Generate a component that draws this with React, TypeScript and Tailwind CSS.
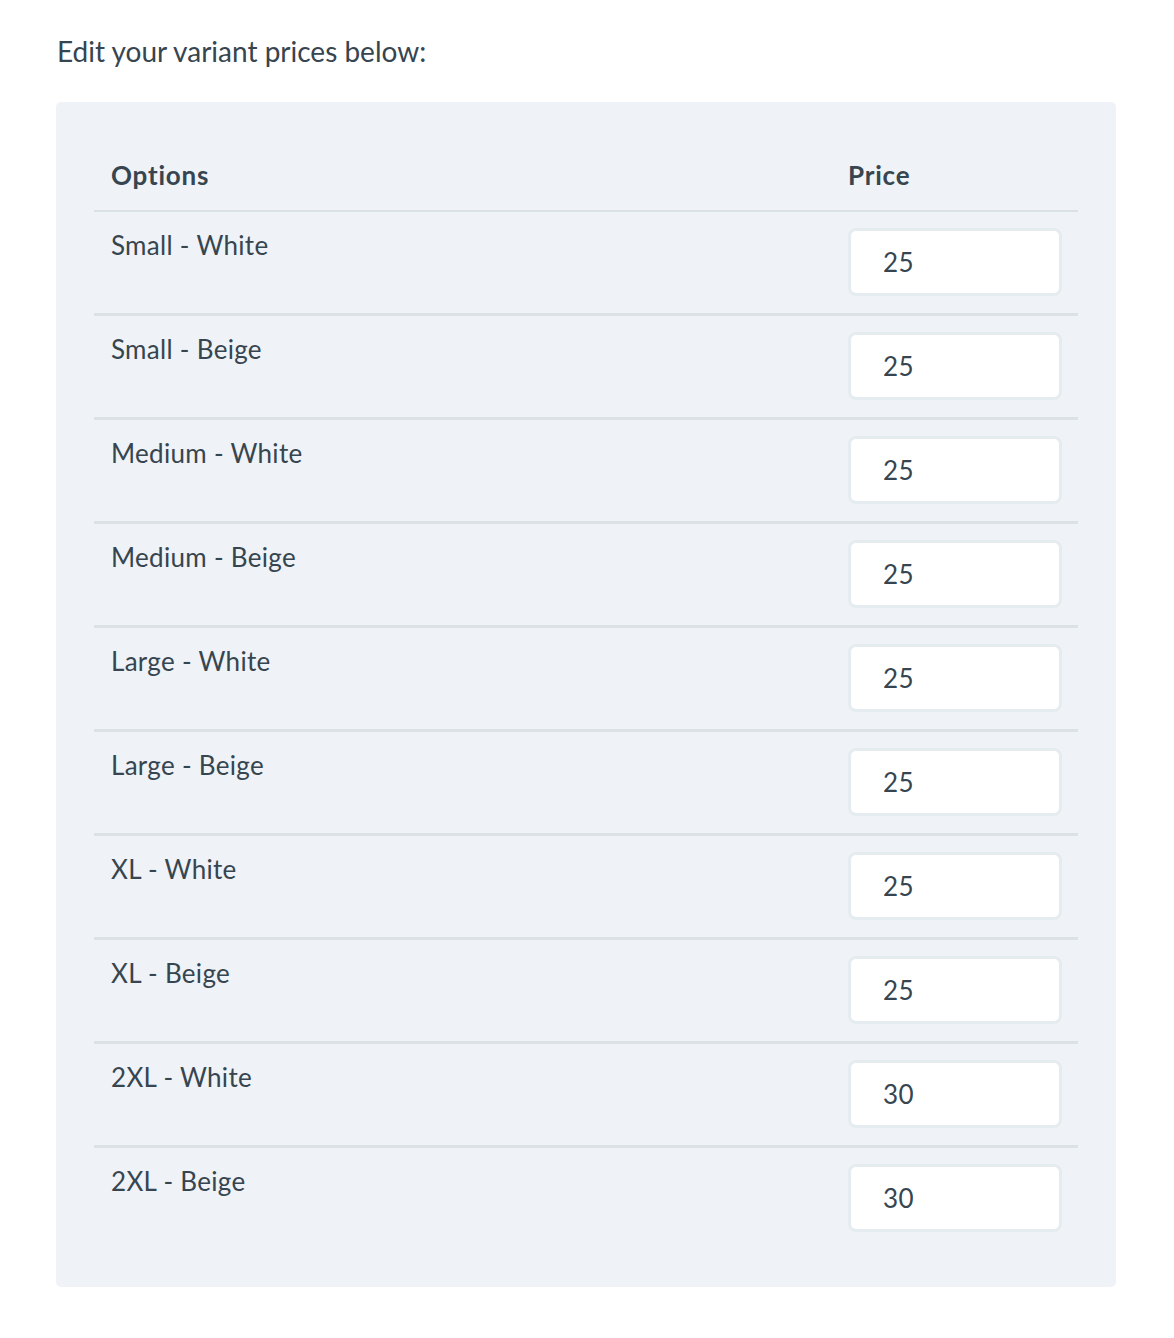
import React, { useState } from 'react';

interface Variant {
  label: string;
  price: string;
}

const initialVariants: Variant[] = [
  { label: 'Small - White', price: '25' },
  { label: 'Small - Beige', price: '25' },
  { label: 'Medium - White', price: '25' },
  { label: 'Medium - Beige', price: '25' },
  { label: 'Large - White', price: '25' },
  { label: 'Large - Beige', price: '25' },
  { label: 'XL - White', price: '25' },
  { label: 'XL - Beige', price: '25' },
  { label: '2XL - White', price: '30' },
  { label: '2XL - Beige', price: '30' },
];

const App: React.FC = () => {
  const [variants, setVariants] = useState<Variant[]>(initialVariants);

  const handlePriceChange = (index: number, value: string) => {
    setVariants((prev) => prev.map((v, i) => (i === index ? { ...v, price: value } : v)));
  };

  return (
    <div className="min-h-screen bg-white text-[#36454f] font-['Lato','Open_Sans',sans-serif] pt-[33px] pl-[56px] pr-[58px]">
      <p className="text-[28px] leading-[36px] pl-px">Edit your variant prices below:</p>

      <div className="mt-[33px] bg-[#eff2f6] rounded-[5px] p-[38px]">
        {/* Header */}
        <div className="flex border-b-2 border-[#dbe2e6]">
          <div className="flex-1 px-[17px] py-[17px] text-[26px] leading-[36px] font-bold tracking-[0.8px]">Options</div>
          <div className="w-[247px] px-[17px] py-[17px] text-[26px] leading-[36px] font-bold tracking-[0.8px]">Price</div>
        </div>

        {/* Rows */}
        {variants.map((variant, index) => (
          <div
            key={variant.label}
            className={`flex ${index < variants.length - 1 ? 'border-b-[3px] border-[#dbe2e6]' : ''}`}
          >
            <div className="flex-1 px-[17px] pt-[15px] text-[26px] leading-[36px] tracking-[0.3px]">{variant.label}</div>
            <div className="w-[247px] px-[17px] pt-[16px] pb-[17px]">
              <input
                type="text"
                value={variant.price}
                onChange={(e) => handlePriceChange(index, e.target.value)}
                className="w-[214px] h-[68px] bg-white border-[3px] border-[#e5ecef] rounded-[8px] pl-[32px] text-[26px] tracking-[0.5px] text-[#36454f] outline-none"
              />
            </div>
          </div>
        ))}
      </div>
    </div>
  );
};

export default App;
